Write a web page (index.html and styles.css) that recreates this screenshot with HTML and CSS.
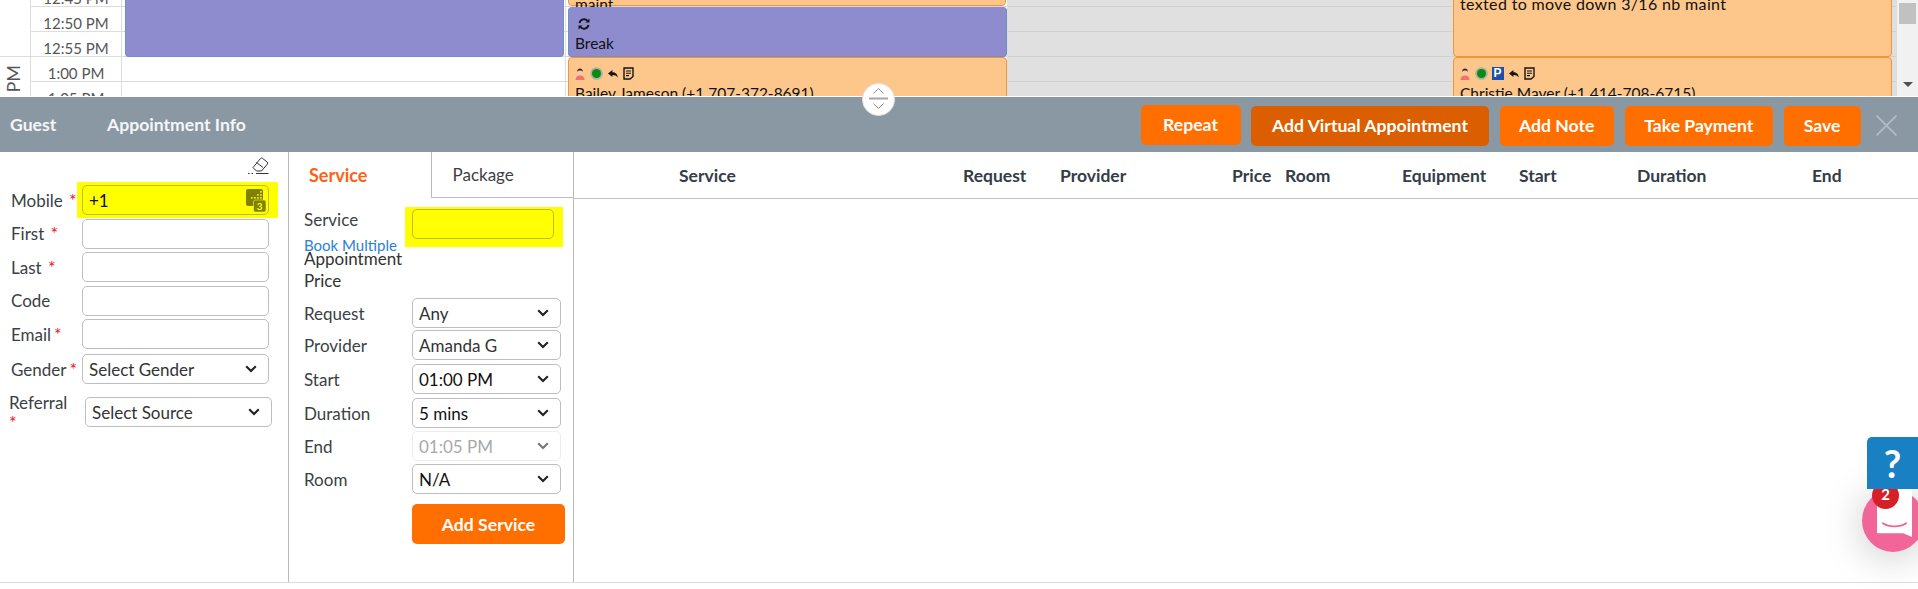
FILE: index.html
```html
<!DOCTYPE html>
<html lang="en">
<head>
<meta charset="utf-8">
<title>Appointment</title>
<link rel="stylesheet" href="styles.css">
</head>
<body>
<svg class="defs" width="0" height="0" aria-hidden="true">
  <defs>
    <symbol id="i-person" viewBox="0 0 10 12">
      <path d="M0.5 12c0-3 1.5-4.600 4.500-4.600s4.500 1.600 4.500 4.600z" fill="#f0736b"/>
      <circle cx="5" cy="4" r="2.700" fill="#f6c6b0"/>
      <path d="M2.200 3.800C2.200 1.600 3.500.5 5 .5s2.800 1.100 2.800 3.300C7 2.800 6 2.400 5 2.500s-2 .4-2.800 1.300z" fill="#3b2a25"/>
    </symbol>
    <symbol id="i-dot" viewBox="0 0 13 13">
      <circle cx="6.500" cy="6.500" r="6.300" fill="#a9b3a4"/>
      <circle cx="6.500" cy="6.500" r="4.500" fill="#0d8a12"/>
    </symbol>
    <symbol id="i-reply" viewBox="0 0 10 8">
      <path d="M0 3.600 4.400 0v2.200c3 0 5 1.600 5.400 5.300C8.600 5.600 7 4.900 4.400 4.900v2.200z" fill="#151515"/>
    </symbol>
    <symbol id="i-note" viewBox="0 0 11 13">
      <path d="M1 1h9v8.500L7 12H1z" fill="none" stroke="#151515" stroke-width="1.400"/>
      <path d="M3 4h5M3 6.300h5M3 8.600h3" stroke="#151515" stroke-width="1.100"/>
    </symbol>
  </defs>
</svg>

<section class="calendar">
  <div class="cal-grid">
    <div class="ampm"><span>1 PM</span></div>

    <div class="time t0"><span>12:45 PM</span></div>
    <div class="time t1"><span>12:50 PM</span></div>
    <div class="time t2"><span>12:55 PM</span></div>
    <div class="time t3"><span>1:00 PM</span></div>
    <div class="time t4"><span>1:05 PM</span></div>

    <div class="lines c1 free"></div>
    <div class="lines c2 free"></div>
    <div class="lines c3 off"></div>
    <div class="lines c4 off"></div>

    <div class="event purple e-block"></div>

    <div class="event orange e-maint"><p class="ev-text">maint</p></div>

    <div class="event purple e-break">
      <svg class="sync" viewBox="0 0 12 12"><path d="M1.500 5A4.600 4.600 0 0 1 9.600 3M10.500 7a4.600 4.600 0 0 1-8.100 2" fill="none" stroke="#151515" stroke-width="1.900"/><path d="M11.500 .5v4h-4zM.5 11.500v-4h4z" fill="#151515"/></svg>
      <p class="ev-text">Break</p>
    </div>

    <div class="event orange e-bailey">
      <div class="ev-icons">
        <svg class="ic-person"><use href="#i-person"/></svg>
        <svg class="ic-dot"><use href="#i-dot"/></svg>
        <svg class="ic-reply"><use href="#i-reply"/></svg>
        <svg class="ic-note"><use href="#i-note"/></svg>
      </div>
      <p class="ev-text">Bailey Jameson (+1 707-372-8691)</p>
    </div>

    <div class="event orange e-texted"><p class="ev-text long">texted to move down 3/16 nb maint</p></div>

    <div class="event orange e-christie">
      <div class="ev-icons">
        <svg class="ic-person"><use href="#i-person"/></svg>
        <svg class="ic-dot"><use href="#i-dot"/></svg>
        <span class="ic-p">P</span>
        <svg class="ic-reply"><use href="#i-reply"/></svg>
        <svg class="ic-note"><use href="#i-note"/></svg>
      </div>
      <p class="ev-text">Christie Mayer (+1 414-708-6715)</p>
    </div>

    <div class="scrollbar">
      <div class="thumb"></div>
      <div class="arrow"></div>
    </div>
  </div>
</section>

<header class="bar">
  <div class="bar-title">
    <span class="guest">Guest</span>
    <span>Appointment Info</span>
  </div>
  <div class="bar-actions">
    <button class="btn repeat">Repeat</button>
    <button class="btn dark">Add Virtual Appointment</button>
    <button class="btn w-note">Add Note</button>
    <button class="btn w-pay">Take Payment</button>
    <button class="btn w-save">Save</button>
    <svg class="close" viewBox="0 0 20 20"><path d="M.5.5l19 19M19.500.5l-19 19" stroke="#b3bcc4" stroke-width="1.600" fill="none"/></svg>
  </div>
  <div class="resizer">
    <svg viewBox="0 0 33 33" width="33" height="33"><path d="M11.500 10.500 16.500 5.500l5 5" fill="none" stroke="#8a8a8a" stroke-width="1"/><path d="M7 15.500h19" stroke="#a5a5a5" stroke-width="2"/><path d="M11.500 20.500l5 5 5-5" fill="none" stroke="#8a8a8a" stroke-width="1"/></svg>
  </div>
</header>

<main class="panels">
  <aside class="guest-panel">
    <svg class="eraser" viewBox="0 0 22 20"><path d="M6 11.500 13.500 2.500a1.500 1.500 0 0 1 2 -.2l4.700 3.800a1.500 1.500 0 0 1 .2 2L14.500 15h-5z" fill="none" stroke="#333" stroke-width="1"/><path d="M9.500 6.500l6.500 5" stroke="#333" stroke-width="1"/><path d="M9 17.500h12.500M1 17.500h1.500M4.500 17.500h1.500" stroke="#333" stroke-width="1"/></svg>
    <div class="fields">
      <div class="field hl-field">
        <label class="lbl">Mobile <b class="req req-m">*</b></label>
        <div class="hl-wrap">
          <input class="ctl mobile" value="+1">
          <svg class="keypad" viewBox="0 0 20 23"><rect x="0" y="0" width="17" height="17" rx="2" fill="#7f7f00"/><path d="M5 8h1.800v1.800H5zM8 8h1.800v1.800H8zM11 8h1.800v1.800H11zM14 8h1.800v1.800H14zM11 5h1.800v1.800H11zM14 5h1.800v1.800H14zM14 2h1.800v1.800H14z" fill="#e8e800"/><rect x="7.500" y="11" width="12.500" height="12" rx="2" fill="#7f7f00" stroke="#ffff00" stroke-width=".6"/><text x="13.700" y="21" text-anchor="middle" class="key-3">3</text></svg>
        </div>
      </div>
      <div class="field"><label class="lbl">First <b class="req req-m">*</b></label><input class="ctl"></div>
      <div class="field"><label class="lbl">Last <b class="req req-m">*</b></label><input class="ctl"></div>
      <div class="field"><label class="lbl">Code</label><input class="ctl"></div>
      <div class="field"><label class="lbl">Email<b class="req req-e">*</b></label><input class="ctl"></div>
      <div class="field gender"><label class="lbl">Gender<b class="req req-e">*</b></label>
        <select class="ctl sel"><option>Select Gender</option></select></div>
      <div class="field referral"><label class="lbl lbl-ref">Referral<br><b class="req req-r">*</b></label>
        <select class="ctl sel"><option>Select Source</option></select></div>
    </div>
  </aside>

  <section class="service-panel">
    <div class="tabs">
      <div class="tab active">Service</div>
      <div class="tab">Package</div>
    </div>
    <div class="svc-form">
      <div class="svc-top">
        <div class="svc-labels">
          <div class="svc-name">Service</div>
          <a class="multi">Book Multiple</a>
          <div class="appt-price">Appointment<br>Price</div>
        </div>
        <div class="hl-service"><input class="ctl svc-input"></div>
      </div>
      <div class="svc-row tight"><label class="lbl2">Request</label><select class="ctl sel2"><option>Any</option></select></div>
      <div class="svc-row loose"><label class="lbl2">Provider</label><select class="ctl sel2"><option>Amanda G</option></select></div>
      <div class="svc-row loose"><label class="lbl2">Start</label><select class="ctl sel2 strong"><option>01:00 PM</option></select></div>
      <div class="svc-row"><label class="lbl2">Duration</label><select class="ctl sel2 strong"><option>5 mins</option></select></div>
      <div class="svc-row"><label class="lbl2">End</label><select class="ctl sel2" disabled><option>01:05 PM</option></select></div>
      <div class="svc-row"><label class="lbl2">Room</label><select class="ctl sel2 strong"><option>N/A</option></select></div>
      <button class="btn add">Add Service</button>
    </div>
  </section>

  <section class="table-panel">
    <div class="thead">
      <span class="th h-service">Service</span>
      <span class="th h-request">Request</span>
      <span class="th h-provider">Provider</span>
      <span class="th h-price">Price</span>
      <span class="th h-room">Room</span>
      <span class="th h-equip">Equipment</span>
      <span class="th h-start">Start</span>
      <span class="th h-duration">Duration</span>
      <span class="th h-end">End</span>
    </div>
  </section>
</main>

<aside class="widgets">
  <div class="chat">
    <div class="chat-bubble"></div>
    <svg class="chat-smile" viewBox="0 0 26 6"><path d="M1 1.200C7 5.500 19 5.500 25 1.200" fill="none" stroke="#f26598" stroke-width="2" stroke-linecap="round"/></svg>
    <span class="chat-badge">2</span>
  </div>
  <div class="help">?</div>
</aside>
</body>
</html>
```

FILE: styles.css
```css
* { box-sizing: border-box; }
html, body { margin: 0; padding: 0; }
body {
  width: 1918px;
  height: 589px;
  overflow: hidden;
  position: relative;
  background: #fff;
  font-family: Lato, "Liberation Sans", sans-serif;
  font-size: 17px;
  color: #333;
}
.defs { position: absolute; }

/* calendar */
.calendar { height: 96px; overflow: hidden; background: #fff; }
.cal-grid {
  display: grid;
  grid-template-columns: 30px 92px 444px 442px 444px 445px 21px;
  grid-template-rows: 6px repeat(4, 25px);
  height: 106px;
}
.ampm {
  grid-column: 1; grid-row: 4 / 6;
  border-top: 1px solid #ddd;
  overflow: hidden;
  display: flex;
  justify-content: center;
  align-items: flex-start;
  padding-right: 3px;
}
.ampm span {
  writing-mode: vertical-rl;
  transform: rotate(180deg);
  font-size: 18px;
  line-height: 25px;
  color: #555;
  margin-top: 8px;
  white-space: nowrap;
}
.time {
  grid-column: 2;
  border-top: 1px solid #ddd;
  border-right: 1px solid #ddd;
  border-left: 1px solid #ddd;
  font-size: 15px;
  color: #555;
  display: flex;
  align-items: flex-end;
  justify-content: center;
  line-height: 19px;
}
.t0 { grid-row: 1; border-top: 0; }
.t1 { grid-row: 2; }
.t2 { grid-row: 3; }
.t3 { grid-row: 4; }
.t4 { grid-row: 5; }
.time span { position: relative; top: 2px; white-space: nowrap; }

.lines {
  grid-row: 1 / 6;
  background-size: 100% 25px;
  background-repeat: repeat-y;
  background-position: 0 7px;
  border-right: 1px solid #ddd;
}
.free { background-image: linear-gradient(#fff 0, #fff 24px, #d8d8d8 24px, #d8d8d8 25px); }
.off { background-image: linear-gradient(#e0e0e0 0, #e0e0e0 24px, #d0d0d0 24px, #d0d0d0 25px); }
.c1 { grid-column: 3; }
.c2 { grid-column: 4; }
.c3 { grid-column: 5; }
.c4 { grid-column: 6; }

.event {
  border-radius: 4px;
  overflow: hidden;
  padding: 0 6px;
  font-size: 15.500px;
  color: #111;
  z-index: 1;
}
.event.purple { background: #8e8ccf; border: 1px solid #6f8fc4; border-top-color: #8e8ccf; }
.event.orange { background: #fdc78c; border: 1px solid #f3933a; }
.ev-text { margin: 0; line-height: 20px; white-space: nowrap; }
.ev-text.long { font-size: 16px; letter-spacing: .35px; }

.e-block   { grid-column: 3; grid-row: 1 / 4; margin: -10px 2px -1px 3px; }
.e-maint   { grid-column: 4; grid-row: 1; margin: -20px 2px 0 2px; border-bottom-width: 2px; display: flex; align-items: flex-end; overflow: visible; }
.e-maint .ev-text { line-height: 17px; margin-bottom: -8px; }
.e-break   { grid-column: 4; grid-row: 2 / 4; margin: 1px 1px -1px 2px; padding-top: 10px; }
.e-break .ev-text { margin-top: 3px; }
.e-bailey  { grid-column: 4; grid-row: 4 / 6; margin: 1px 1px 0 2px; padding-top: 9px; }
.e-texted  { grid-column: 6; grid-row: 1 / 4; margin: -20px 5px -1px 1px; padding-top: 13px; border-bottom-width: 2px; }
.e-christie{ grid-column: 6; grid-row: 4 / 6; margin: 1px 5px 0 1px; padding-top: 9px; }

.sync { display: block; width: 12px; height: 12px; margin-left: 2.500px; }
.ev-icons { display: flex; align-items: center; height: 13px; margin-bottom: 3px; }
.ic-person { width: 10px; height: 12px; }
.ic-dot { width: 13px; height: 13px; margin-left: 4.500px; }
.ic-reply { width: 10px; height: 8px; margin-left: 5px; }
.ic-note { width: 11px; height: 13px; margin-left: 5px; }
.ic-p {
  width: 12px; height: 13px; margin-left: 4px;
  background: #1d4fa8; color: #fff;
  font: bold 12px/13px "Liberation Sans", sans-serif;
  text-align: center;
}

.scrollbar {
  grid-column: 7; grid-row: 1 / 6;
  background: #f1f1f1;
  padding: 3px 2px 0;
}
.thumb { width: 17px; height: 21px; background: #c1c1c1; }
.arrow {
  margin: 58px 0 0 4px;
  width: 0; height: 0;
  border-left: 5px solid transparent;
  border-right: 5px solid transparent;
  border-top: 5px solid #505050;
}

/* title bar */
.bar {
  height: 56px;
  background: #8a98a4;
  border-top: 1px solid #fff;
  display: flex;
  align-items: center;
  justify-content: space-between;
  position: relative;
  z-index: 2;
}
.bar-title {
  font-weight: bold;
  font-size: 17.600px;
  color: #f4f6f8;
  padding-left: 10px;
  display: flex;
}
.guest { width: 97px; }
.bar-actions { display: flex; align-items: center; gap: 10.500px; padding-right: 21px; }
.btn {
  border: 0;
  background: #ff6f00;
  color: #fff;
  font-family: Lato, "Liberation Sans", sans-serif;
  font-weight: bold;
  font-size: 17.600px;
  height: 40px;
  border-radius: 5px;
  padding: 0;
  margin-top: 2px;
}
.btn.repeat { margin-top: 0; width: 100px; }
.btn.dark { background: #db5f00; width: 238px; }
.w-note { width: 114.500px; }
.w-pay { width: 148.500px; }
.w-save { width: 77px; }
.close { width: 21px; height: 21px; margin: 1px 0 0 5px; }
.resizer {
  position: absolute;
  left: 862px; top: -14px;
  width: 33px; height: 33px;
  border-radius: 50%;
  background: #fff;
  border: 1px solid #e4e4e4;
  display: flex;
  align-items: center;
  justify-content: center;
}
.resizer svg { flex: none; }

/* panels */
.panels {
  display: flex;
  height: 431px;
  border-bottom: 1px solid #ddd;
  background: #fff;
}
.guest-panel {
  width: 288px;
  position: relative;
  padding-top: 33px;
}
.eraser {
  position: absolute;
  right: 19px; top: 4px;
  width: 22px; height: 20px;
}
.fields { display: flex; flex-direction: column; gap: 3.500px; }
.field { display: flex; align-items: center; height: 30px; padding-left: 11px; }
.lbl { width: 71px; flex: none; white-space: nowrap; color: #3a3f45; }
.req { color: #e8141c; font-weight: normal; font-size: 18px; line-height: 1; position: relative; top: 0; }
.req-m { margin-left: 2px; }
.req-e { margin-left: 3px; }
.ctl {
  width: 187px;
  height: 30px;
  border: 1px solid #bdbdbd;
  border-radius: 5px;
  background: #fff;
  font-family: Lato, "Liberation Sans", sans-serif;
  font-size: 17px;
  color: #333;
  padding: 0 6px;
  outline: 0;
  flex: none;
}
.hl-wrap {
  background: #ffff00;
  margin-left: -5px;
  padding: 3px 9px 4px 5px;
  height: 36px;
  width: 201px;
  flex: none;
  position: relative;
}
.mobile { background: #ffff00; border-color: #bcbc2a; color: #111; display: block; }
.keypad { position: absolute; right: 12px; top: 7px; width: 20px; height: 23px; }
.key-3 { font: bold 10px Lato, sans-serif; fill: #ffff00; }
.sel, .sel2 {
  appearance: none;
  -webkit-appearance: none;
  background-image: url("data:image/svg+xml,%3Csvg xmlns='http://www.w3.org/2000/svg' viewBox='0 0 12 8'%3E%3Cpath d='M1.200 1.200 6 6l4.800-4.800' fill='none' stroke='%23222' stroke-width='2.100'/%3E%3C/svg%3E");
  background-repeat: no-repeat;
  background-position: right 11px center;
  background-size: 12px 8px;
}
.gender { margin-top: 1.500px; }
.referral { margin-top: 9.500px; padding-left: 9px; }
.lbl-ref { width: 76px; line-height: 21px; position: relative; top: 1px; }
.req-r { top: -1px; line-height: 10px; }

.service-panel {
  width: 286px;
  border-left: 1px solid #bbb;
  border-right: 1px solid #bbb;
}
.tabs { display: flex; height: 46px; }
.tab {
  border-bottom: 1px solid #bbb;
  display: flex;
  align-items: center;
  color: #3a3f45;
  font-size: 17px;
  width: 142px;
  padding-left: 21px;
}
.tab.active {
  width: 143px;
  border-bottom: 0;
  border-right: 1px solid #bbb;
  color: #ff6014;
  font-weight: bold;
  font-size: 18px;
  padding-left: 20px;
}
.svc-form { padding: 0 0 0 15px; }
.svc-top { display: flex; height: 100px; }
.svc-labels { width: 108px; padding-top: 10px; flex: none; }
.svc-name { color: #3a3f45; line-height: 24px; }
.multi { display: block; color: #2a80d5; font-size: 15px; line-height: 18px; margin-top: 4px; white-space: nowrap; }
.appt-price { color: #333; line-height: 22px; margin-top: -6px; white-space: nowrap; }
.hl-service {
  background: #ffff00;
  width: 158px;
  height: 40px;
  margin: 9px 0 0 -7px;
  padding: 2px 0 0 7px;
}
.svc-input { width: 142px; background: #ffff00; border-color: #bcbc2a; display: block; }
.svc-row { display: flex; align-items: center; height: 30px; margin-bottom: 3px; }
.svc-row.tight { margin-bottom: 2px; }
.svc-row.loose { margin-bottom: 4px; }
.lbl2 { width: 108px; color: #3a3f45; flex: none; }
.sel2 { width: 149px; }
.sel2.strong { color: #111; }
.sel2:disabled { opacity: 1; color: #a9a9a9; border-color: #ececec; background-color: #fff; background-image: url("data:image/svg+xml,%3Csvg xmlns='http://www.w3.org/2000/svg' viewBox='0 0 12 8'%3E%3Cpath d='M1.200 1.200 6 6l4.800-4.800' fill='none' stroke='%23777' stroke-width='2.100'/%3E%3C/svg%3E"); }
.btn.add { display: block; width: 153px; margin: 10px 0 0 108px; }

.table-panel { flex: 1; }
.thead {
  display: grid;
  grid-template-columns: 105px 284px 97px 172px 53px 117px 117px 118px 175px auto;
  height: 47px;
  align-items: center;
  border-bottom: 1px solid #bcc3ca;
}
.th { font-weight: bold; font-size: 17.500px; color: #333c47; grid-row: 1; white-space: nowrap; }
.h-service { grid-column: 2; }
.h-request { grid-column: 3; }
.h-provider { grid-column: 4; }
.h-price { grid-column: 5; }
.h-room { grid-column: 6; }
.h-equip { grid-column: 7; }
.h-start { grid-column: 8; }
.h-duration { grid-column: 9; }
.h-end { grid-column: 10; }

/* floating widgets */
.widgets { position: absolute; left: 0; top: 0; width: 0; height: 0; z-index: 5; }
.help {
  position: absolute;
  left: 1867px; top: 437px;
  width: 51px; height: 52px;
  background: #1a80c4;
  border-top-left-radius: 5px;
  color: #fff;
  font: bold 38px/52px Lato, sans-serif;
  text-align: center;
}
.chat {
  position: absolute;
  left: 1862px; top: 489px;
  width: 56px; height: 64px;
}
.chat::before {
  content: "";
  position: absolute;
  left: 0; top: 0;
  width: 62px; height: 63px;
  border-radius: 50%;
  background: #f26598;
  box-shadow: 0 4px 40px rgba(0,0,0,.22);
}
.chat-bubble {
  position: absolute;
  left: 15px; top: 0;
  width: 35px; height: 48px;
  background: #fff;
  border-radius: 0 0 0 5px;
  clip-path: polygon(0 0, 100% 0, 100% 100%, 75% 92%, 0 92%);
}
.chat-smile { position: absolute; left: 20px; top: 33px; width: 25px; height: 6px; }
.chat-badge {
  position: absolute;
  left: 10px; top: -7px;
  width: 27px; height: 27px;
  border-radius: 50%;
  background: #d62027;
  color: #fff;
  font: bold 15px/24px Lato, sans-serif;
  text-align: center;
}
```
